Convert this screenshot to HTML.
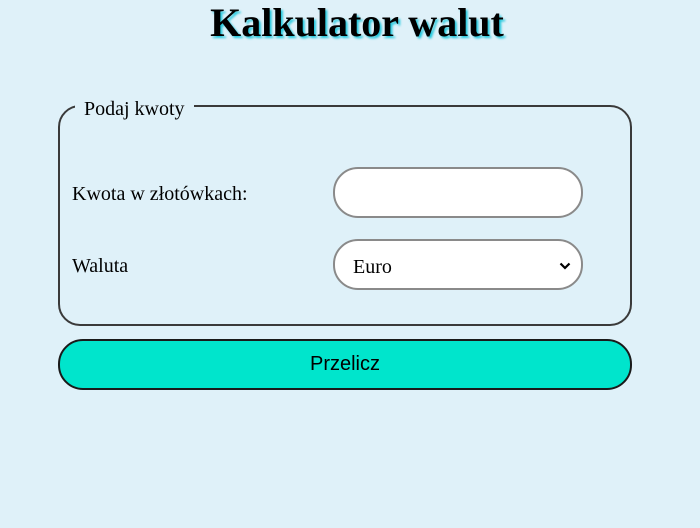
<!DOCTYPE html>
<html><head><meta charset="utf-8"><style>
body{margin:0;width:700px;height:528px;background:#dff1f9;font-family:"Liberation Serif",serif;position:relative;overflow:hidden}
h1{position:absolute;top:1px;left:0;width:714px;margin:0;text-align:center;font-size:40px;line-height:44px;font-weight:bold;color:#000;text-shadow:2px 2px 2px #22c8dd}
.fs{position:absolute;left:58px;top:105px;width:570px;height:217px;border:2px solid #3a3a3a;border-radius:22px}
.lg{position:absolute;left:75px;top:96px;padding:0 9px;background:#dff1f9;font-size:20px;line-height:26px}
.lbl{position:absolute;left:72px;font-size:20px}
.in{position:absolute;left:333px;width:246px;height:47px;border:2px solid #8a8a8a;border-radius:25px;background:#fff;font-size:20px}
.btn{position:absolute;left:58px;top:339px;width:570px;height:47px;border:2px solid #1a1a1a;border-radius:25px;background:#00e5cc;font-family:"Liberation Sans",sans-serif;font-size:20px;text-align:center;line-height:47px}
</style></head><body>
<h1>Kalkulator walut</h1>
<div class="fs"></div>
<div class="lg">Podaj kwoty</div>
<div class="lbl" style="top:183px">Kwota w złotówkach:</div>
<div class="in" style="top:167px"></div>
<div class="lbl" style="top:255px">Waluta</div>
<div class="in" style="top:239px"><span style="position:absolute;left:18px;top:15px">Euro</span>
<svg style="position:absolute;right:10px;top:21px" width="12" height="8" viewBox="0 0 12 8"><path d="M1.5 1.5L6 6L10.5 1.5" fill="none" stroke="#000" stroke-width="2.2"/></svg></div>
<div class="btn">Przelicz</div>
</body></html>
